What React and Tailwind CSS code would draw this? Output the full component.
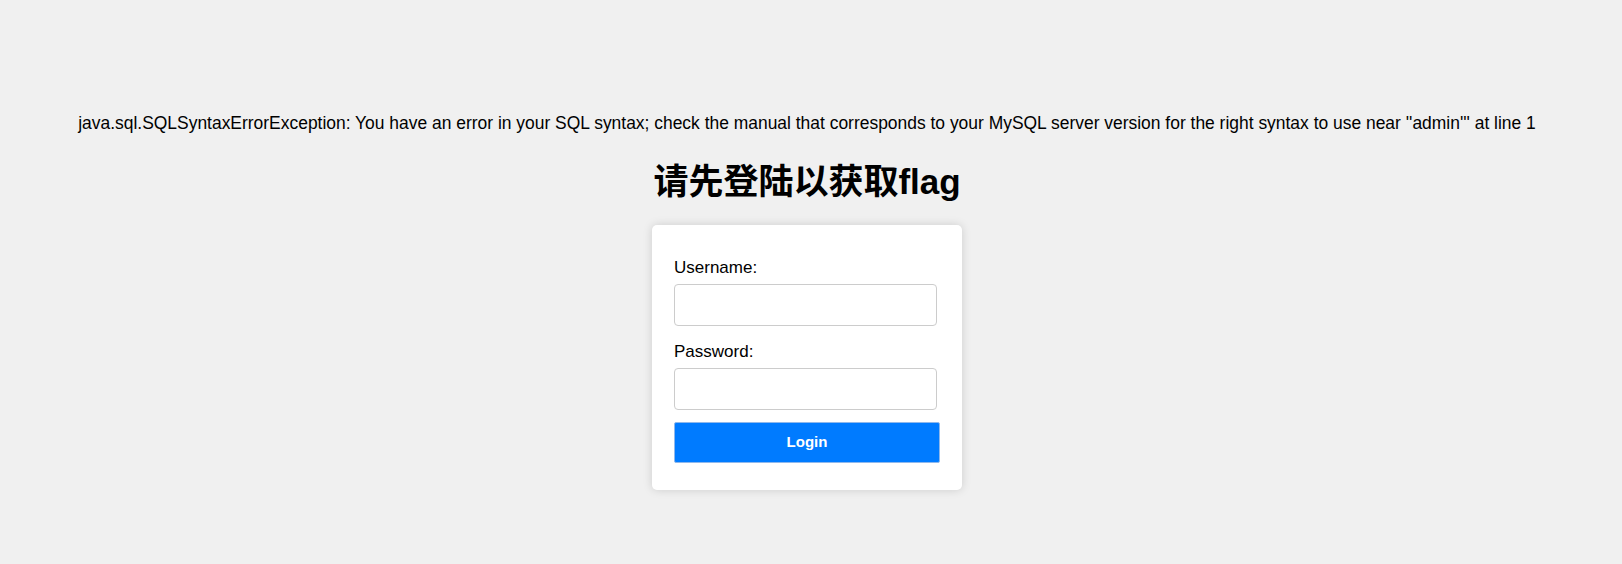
import React from 'react';

const App = () => {
  return (
    <div className="min-h-[564px] bg-[#f0f0f0] pr-[8px] font-['Liberation_Sans',Arial,'Noto_Sans_CJK_SC',sans-serif] text-black">
      <div className="flex flex-col items-center pt-[113px]">
        <p className="text-[17.45px] leading-[20px] whitespace-nowrap">
          java.sql.SQLSyntaxErrorException: You have an error in your SQL syntax; check the manual that corresponds to your MySQL server version for the right syntax to use near ''admin''' at line 1
        </p>

        <h1 className="mt-[26px] text-[35px] font-bold leading-[46px]">请先登陆以获取flag</h1>

        <form className="mt-[20px] w-[310px] rounded-[5px] bg-white px-[22px] pt-[34px] pb-[27px] shadow-[0_0_10px_rgba(0,0,0,0.15)]">
          <label className="block text-[17px] leading-[18px]">Username:</label>
          <input
            type="text"
            className="mt-[7px] block h-[42px] w-[263px] rounded-[4px] border border-[#cccccc] bg-white px-[10px] outline-none"
          />
          <label className="mt-[17px] block text-[17px] leading-[18px]">Password:</label>
          <input
            type="password"
            className="mt-[7px] block h-[42px] w-[263px] rounded-[4px] border border-[#cccccc] bg-white px-[10px] outline-none"
          />
          <button
            type="button"
            className="mt-[12px] block h-[41px] w-full rounded-[2px] border border-[#8fb8ec] bg-[#007bff] text-[15px] font-bold text-white"
          >
            Login
          </button>
        </form>
      </div>
    </div>
  );
};

export default App;
